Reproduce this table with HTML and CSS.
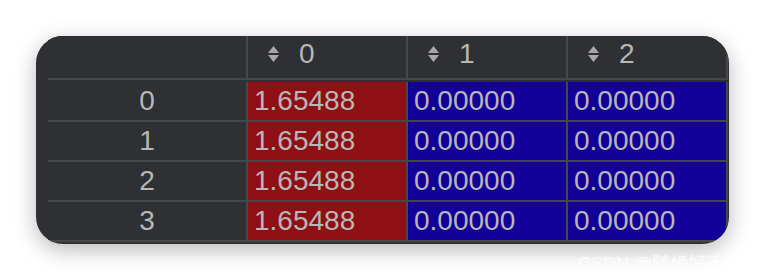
FILE: index.html
```html
<!DOCTYPE html>
<html>
<head>
<meta charset="utf-8">
<link rel="stylesheet" href="styles.css">
</head>
<body>
<div class="stage">
  <div class="card">
    <div class="table">
      <div class="row head">
        <div class="cell idx"></div>
        <div class="cell th"><span class="sort"><svg width="11" height="16" viewBox="0 0 11 16"><path d="M5.5 0L11 7H0Z" fill="#a8a8a8"/><path d="M5.5 16L11 9H0Z" fill="#a8a8a8"/></svg></span><span>0</span></div>
        <div class="cell th"><span class="sort"><svg width="11" height="16" viewBox="0 0 11 16"><path d="M5.5 0L11 7H0Z" fill="#a8a8a8"/><path d="M5.5 16L11 9H0Z" fill="#a8a8a8"/></svg></span><span>1</span></div>
        <div class="cell th"><span class="sort"><svg width="11" height="16" viewBox="0 0 11 16"><path d="M5.5 0L11 7H0Z" fill="#a8a8a8"/><path d="M5.5 16L11 9H0Z" fill="#a8a8a8"/></svg></span><span>2</span></div>
      </div>
      <div class="row">
        <div class="cell idx">0</div>
        <div class="cell red">1.65488</div>
        <div class="cell blue">0.00000</div>
        <div class="cell blue">0.00000</div>
      </div>
      <div class="row">
        <div class="cell idx">1</div>
        <div class="cell red">1.65488</div>
        <div class="cell blue">0.00000</div>
        <div class="cell blue">0.00000</div>
      </div>
      <div class="row">
        <div class="cell idx">2</div>
        <div class="cell red">1.65488</div>
        <div class="cell blue">0.00000</div>
        <div class="cell blue">0.00000</div>
      </div>
      <div class="row">
        <div class="cell idx">3</div>
        <div class="cell red">1.65488</div>
        <div class="cell blue">0.00000</div>
        <div class="cell blue">0.00000</div>
      </div>
    </div>
  </div>
  <div class="watermark">CSDN @随缘好不好</div>
</div>
</body>
</html>
```
FILE: styles.css
```css
html, body {
  margin: 0;
  padding: 0;
  background: #ffffff;
}
.stage {
  position: relative;
  width: 766px;
  height: 280px;
  padding: 36px 0 0 36px;
  box-sizing: border-box;
}
.card {
  width: 693px;
  height: 208px;
  background: #2f3033;
  border-radius: 27px;
  overflow: hidden;
  box-shadow: 0 6px 22px rgba(0, 0, 0, 0.28);
  padding-left: 12px;
  box-sizing: border-box;
}
.table {
  width: 680px;
  font-family: "Liberation Sans", Arial, sans-serif;
  font-size: 28px;
  color: #b7b7b7;
}
.row {
  display: grid;
  grid-template-columns: 198px 158px 158px 158px;
  column-gap: 2px;
  padding-right: 2px;
  background: #464749;
  border-bottom: 2px solid #464749;
  height: 40px;
  box-sizing: border-box;
}
.row.head {
  height: 44px;
  margin-bottom: 2px;
}
.cell {
  display: flex;
  align-items: center;
  padding-left: 6px;
  background: #2f3033;
  line-height: 1;
}
.cell.idx {
  justify-content: center;
  padding-left: 0;
}
.cell.th {
  padding-left: 20px;
  padding-bottom: 7px;
  gap: 20px;
}
.sort {
  display: flex;
}
.red {
  background: #8e1014;
}
.blue {
  background: #130099;
}
.watermark {
  position: absolute;
  left: 578px;
  top: 249px;
  font-family: "Liberation Sans", "Noto Sans CJK SC", sans-serif;
  font-size: 18px;
  color: rgba(255, 255, 255, 0.75);
  white-space: nowrap;
}
```
